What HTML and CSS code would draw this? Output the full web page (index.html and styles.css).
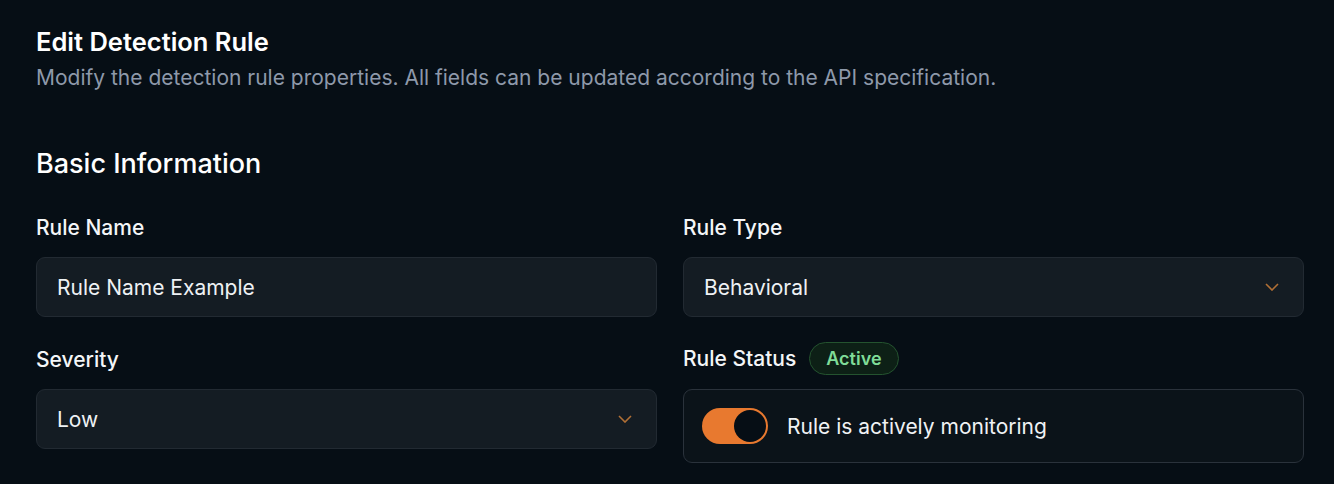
FILE: index.html
```html
<!DOCTYPE html>
<html lang="en">
<head>
<meta charset="utf-8">
<title>Edit Detection Rule</title>
<link rel="stylesheet" href="styles.css">
</head>
<body>
<main class="page">
  <header class="head">
    <h1 class="title">Edit Detection Rule</h1>
    <p class="subtitle">Modify the detection rule properties. All fields can be updated according to the API specification.</p>
  </header>
  <section class="section">
    <h2 class="section-title">Basic Information</h2>
    <div class="grid">
      <div class="field">
        <label class="label">Rule Name</label>
        <div class="input">Rule Name Example</div>
      </div>
      <div class="field">
        <label class="label">Rule Type</label>
        <div class="input select">Behavioral
          <svg class="chev" width="14" height="8" viewBox="0 0 14 8"><path d="M1 1l6 6 6-6" fill="none" stroke="#b06f35" stroke-width="1.6"/></svg>
        </div>
      </div>
      <div class="field">
        <label class="label label-offset">Severity</label>
        <div class="input select">Low
          <svg class="chev" width="14" height="8" viewBox="0 0 14 8"><path d="M1 1l6 6 6-6" fill="none" stroke="#b06f35" stroke-width="1.6"/></svg>
        </div>
      </div>
      <div class="field">
        <div class="label-row">
          <label class="label">Rule Status</label>
          <span class="badge">Active</span>
        </div>
        <div class="toggle-box">
          <span class="toggle"><span class="knob"></span></span>
          <span class="toggle-text">Rule is actively monitoring</span>
        </div>
      </div>
    </div>
  </section>
</main>
</body>
</html>
```
FILE: styles.css
```css
* { box-sizing: border-box; }
html, body { margin: 0; padding: 0; }
body {
  background: #060e15;
  color: #f2f4f6;
  font-family: Inter, "Noto Sans", sans-serif;
}
.page {
  width: 1334px;
  padding: 28px 30px 0 36px;
}
.title {
  margin: 0;
  font-size: 25.5px;
  line-height: 28px;
  font-weight: 600;
  color: #ffffff;
}
.subtitle {
  margin: 8px 0 0;
  font-size: 21px;
  line-height: 28px;
  color: #8e99aa;
}
.section { margin-top: 55px; }
.section-title {
  margin: 0;
  font-size: 27px;
  line-height: 34px;
  font-weight: 500;
  color: #ffffff;
}
.grid {
  margin-top: 33px;
  display: grid;
  grid-template-columns: 1fr 1fr;
  column-gap: 26px;
  row-gap: 25px;
  align-items: start;
}
.field { display: flex; flex-direction: column; }
.label {
  display: block;
  font-size: 21px;
  line-height: 28px;
  font-weight: 500;
  color: #f4f6f8;
  margin-bottom: 15px;
}
.label-offset { padding-top: 4px; margin-bottom: 15px; }
.input {
  height: 60px;
  border: 1px solid #222a32;
  border-radius: 9px;
  background: #141c23;
  padding: 0 20px;
  display: flex;
  align-items: center;
  font-size: 21px;
  color: #eef1f4;
}
.select { justify-content: space-between; }
.chev { margin-right: 4px; }
.label-row {
  display: flex;
  align-items: center;
  gap: 13px;
  height: 33px;
  margin-bottom: 14px;
}
.label-row .label { margin-bottom: 0; }
.badge {
  height: 33px;
  padding: 0 16px;
  border: 1.5px solid #24532f;
  background: #0d2016;
  border-radius: 17px;
  color: #7fdc98;
  font-size: 18px;
  font-weight: 600;
  display: inline-flex;
  align-items: center;
}
.toggle-box {
  height: 74px;
  border: 1.5px solid #2a323b;
  border-radius: 9px;
  background: #0b1319;
  display: flex;
  align-items: center;
  padding: 0 18px;
  gap: 19px;
}
.toggle {
  width: 66px;
  height: 36px;
  border-radius: 18px;
  background: #e8792f;
  display: flex;
  align-items: center;
  justify-content: flex-end;
  padding: 2px;
}
.knob {
  width: 32px;
  height: 32px;
  border-radius: 50%;
  background: #060e15;
}
.toggle-text {
  font-size: 21px;
  color: #f0f2f4;
}
```
